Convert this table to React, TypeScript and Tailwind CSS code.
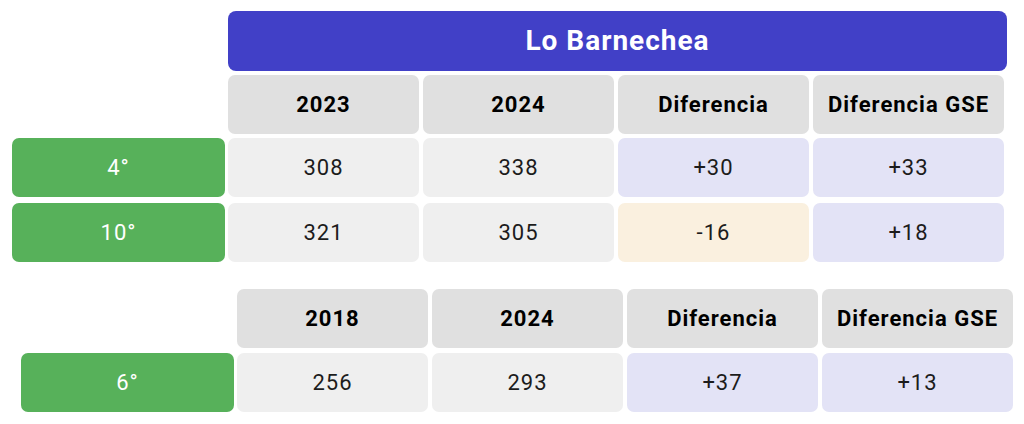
const font = { fontFamily: "Roboto, 'Liberation Sans', sans-serif" };

type Tone = "plain" | "good" | "warn";

const toneClass: Record<Tone, string> = {
  plain: "bg-[#efefef]",
  good: "bg-[#e3e3f6]",
  warn: "bg-[#faf0df]",
};

function Head({ label }: { label: string }) {
  return (
    <div className="w-[191px] h-[59px] rounded-[7px] bg-[#e0e0e0] flex items-center justify-center text-[22px] font-bold text-black tracking-[1px]">
      {label}
    </div>
  );
}

function Cell({ value, tone = "plain" }: { value: string; tone?: Tone }) {
  return (
    <div
      className={`w-[191px] h-[59px] rounded-[7px] flex items-center justify-center text-[22px] text-[#1c1c1c] tracking-[1px] ${toneClass[tone]}`}
    >
      {value}
    </div>
  );
}

function Grade({ label }: { label: string }) {
  return (
    <div className="w-[213px] h-[59px] rounded-[7px] bg-[#57b15a] flex items-center justify-center text-[22px] text-white tracking-[1px]">
      {label}
    </div>
  );
}

export default function App() {
  return (
    <div className="w-[1024px] h-[424px] bg-white overflow-hidden" style={font}>
      {/* Lo Barnechea 2023-2024 */}
      <div className="pt-[11px] pl-[12px] flex flex-col">
        <div className="flex">
          <div className="w-[216px]" />
          <div className="w-[779px] h-[60px] rounded-[8px] bg-[#4140c7] flex items-center justify-center text-white text-[28px] font-bold tracking-[1px]">
            Lo Barnechea
          </div>
        </div>
        <div className="flex mt-[4px]">
          <div className="w-[216px]" />
          <div className="flex gap-[4px]">
            <Head label="2023" />
            <Head label="2024" />
            <Head label="Diferencia" />
            <Head label="Diferencia GSE" />
          </div>
        </div>
        <div className="flex gap-[3px] mt-[4px]">
          <Grade label="4°" />
          <div className="flex gap-[4px]">
            <Cell value="308" />
            <Cell value="338" />
            <Cell value="+30" tone="good" />
            <Cell value="+33" tone="good" />
          </div>
        </div>
        <div className="flex gap-[3px] mt-[6px]">
          <Grade label="10°" />
          <div className="flex gap-[4px]">
            <Cell value="321" />
            <Cell value="305" />
            <Cell value="-16" tone="warn" />
            <Cell value="+18" tone="good" />
          </div>
        </div>
      </div>

      {/* 2018-2024 */}
      <div className="pt-[27px] pl-[21px] flex flex-col">
        <div className="flex">
          <div className="w-[216px]" />
          <div className="flex gap-[4px]">
            <Head label="2018" />
            <Head label="2024" />
            <Head label="Diferencia" />
            <Head label="Diferencia GSE" />
          </div>
        </div>
        <div className="flex gap-[3px] mt-[5px]">
          <Grade label="6°" />
          <div className="flex gap-[4px]">
            <Cell value="256" />
            <Cell value="293" />
            <Cell value="+37" tone="good" />
            <Cell value="+13" tone="good" />
          </div>
        </div>
      </div>
    </div>
  );
}
